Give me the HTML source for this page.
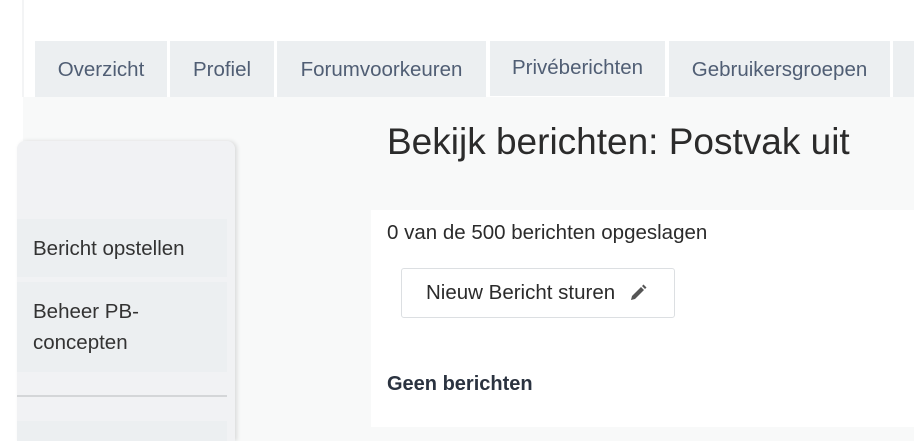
<!DOCTYPE html>
<html><head><meta charset="utf-8"><style>
*{margin:0;padding:0;box-sizing:border-box}
html,body{width:914px;height:441px;overflow:hidden}
body{background:#fff;font-family:"Liberation Sans",sans-serif;position:relative}
.a{position:absolute}
.tab{position:absolute;top:41px;height:56px;background:#eceff1;color:#505e74;font-size:20.5px;line-height:58px;text-align:center;white-space:nowrap}
.item{position:absolute;left:17px;width:210px;background:#eceff1;color:#333;font-size:20.5px;padding-left:16px}
</style></head><body>
<div class="a" style="left:22px;top:0;width:2px;height:97px;background:#f3f4f5"></div>
<div class="a" style="left:23px;top:97px;width:891px;height:344px;background:#f8f9f9"></div>
<div class="tab" style="left:35px;width:132px">Overzicht</div>
<div class="tab" style="left:170px;width:104px">Profiel</div>
<div class="tab" style="left:277px;width:209px">Forumvoorkeuren</div>
<div class="tab" style="left:490px;width:175px;height:55px;line-height:54px">Privéberichten</div>
<div class="tab" style="left:669px;width:221px">Gebruikersgroepen</div>
<div class="tab" style="left:893px;width:30px"></div>
<div class="a" style="left:17px;top:141px;width:218px;height:300px;background:#f1f2f4;border-radius:8px 8px 0 0;box-shadow:2px 0 4px rgba(0,0,0,0.12)"></div>
<div class="item" style="top:219px;height:58px;line-height:60px">Bericht opstellen</div>
<div class="item" style="top:282px;height:90px;line-height:31px;padding-top:14px">Beheer PB-<br>concepten</div>
<div class="a" style="left:17px;top:395px;width:210px;height:2px;background:#d4d6d8"></div>
<div class="item" style="top:421px;height:20px"></div>
<div class="a" style="left:387px;top:121px;font-size:37px;color:#2b2b2b;letter-spacing:0px">Bekijk berichten: Postvak uit</div>
<div class="a" style="left:371px;top:210px;width:543px;height:217px;background:#fff"></div>
<div class="a" style="left:387px;top:221px;font-size:20.5px;color:#2b2b2b">0 van de 500 berichten opgeslagen</div>
<div class="a" style="left:401px;top:268px;width:274px;height:50px;border:1px solid #dcdfe2;border-radius:3px;background:#fff;font-size:20.5px;color:#2b2b2b;line-height:48px;padding-left:24px">Nieuw Bericht sturen
<svg class="a" style="left:226px;top:14px" width="20" height="20" viewBox="0 0 20 20"><path d="M3 17l1-4 9-9 3 3-9 9z M14 3l1.5-1.5 3 3L17 6z" fill="#555"/></svg></div>
<div class="a" style="left:387px;top:373px;font-size:20px;font-weight:bold;color:#2b3340">Geen berichten</div>
</body></html>
